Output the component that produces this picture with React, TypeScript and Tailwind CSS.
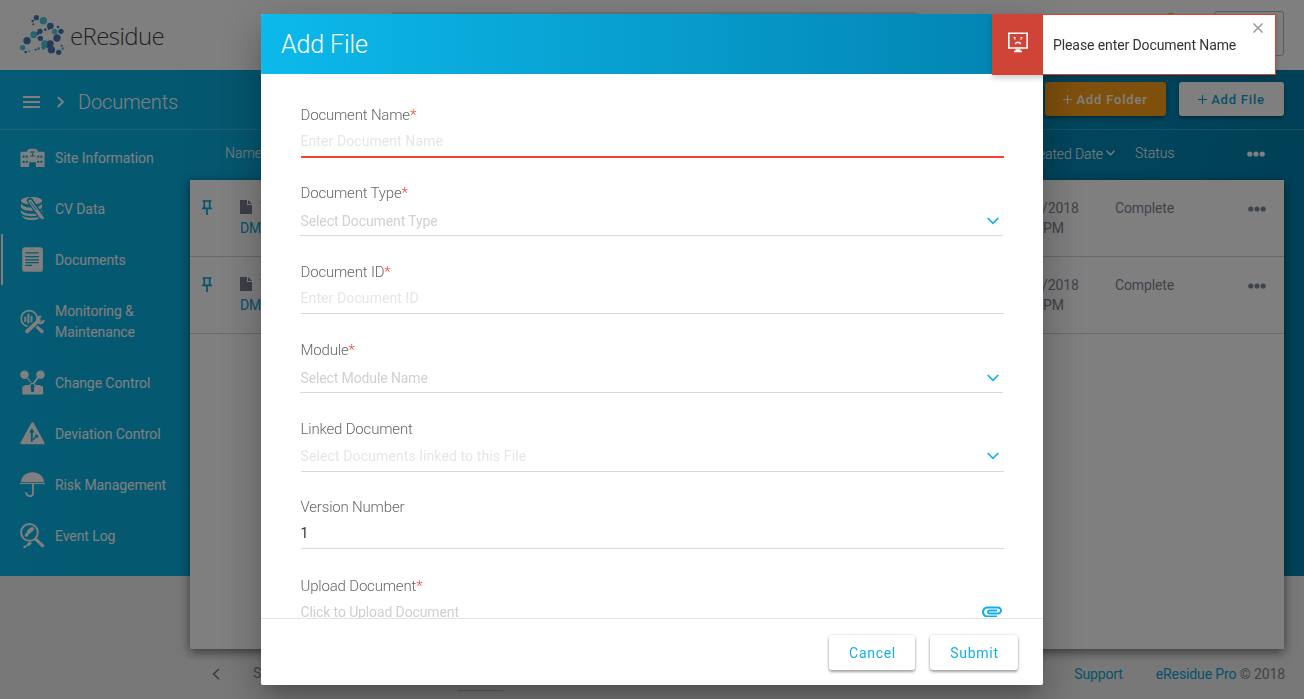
import React from 'react';

const DARK = '#4878b4';
const TEAL = '#4acade';

const logoDots: [number, number, number, string][] = [
  [107, 52, 8, DARK], [96, 62, 4, DARK], [98, 72, 3, DARK], [149, 77, 10, DARK], [172, 80, 4, DARK],
  [181, 93, 8, DARK], [169, 113, 11, DARK], [118, 93, 8, DARK], [110, 100, 5, DARK], [119, 114, 8, DARK],
  [79, 121, 11, DARK], [134, 88, 4, DARK], [144, 86, 3, DARK], [75, 155, 4, DARK], [152, 148, 11, DARK],
  [174, 156, 8, DARK], [183, 136, 3, DARK], [105, 148, 3, DARK], [141, 138, 5, DARK],
  [85, 153, 3, TEAL], [66, 142, 8, TEAL], [99, 103, 10, TEAL], [128, 61, 11, TEAL], [162, 94, 8, TEAL],
  [132, 130, 10, TEAL], [129, 141, 7, TEAL], [186, 145, 4, TEAL], [114, 145, 4, TEAL], [149, 130, 10, DARK],
];

function Logo() {
  return (
    <div className="flex items-center">
      <svg className="h-[40px] w-[44px]" viewBox="58 44 132 120">
        {logoDots.map(([x, y, r, c], i) => (
          <circle key={i} cx={x} cy={y} r={r} fill={c} />
        ))}
      </svg>
      <span className="mt-[2px] ml-[6px] font-['Open_Sans','Noto_Sans',sans-serif] text-[24px] leading-[40px] font-light tracking-[-0.6px] text-[#444]">
        eResidue
      </span>
    </div>
  );
}

const navIcon = 'h-[25px] w-[25px] shrink-0';
const hole = '#0ab0df';

const SiteIcon = () => (
  <svg className={navIcon} viewBox="0 0 26 26" fill="#fff">
    <path d="M.5 7H7.500V5.500L10 4h6l2.500 1.500V7h7v16h-9v-5h-7v5h-9z" />
    <path d="M2.800 11h2v2.300h-2zM6 11h2v2.300H6zM2.800 16.300h2v2.300h-2zM6 16.300h2v2.300H6zM18 11h2v2.300h-2zM21.200 11h2v2.300h-2zM18 16.300h2v2.300h-2zM21.200 16.300h2v2.300h-2zM10.500 6.800h5v1.100h-5zM10.500 10.800h5v1.100h-5zM12.500 8h1v3h-1z" fill={hole} />
    <path d="M11 18.500h4V23h-4z" fill={hole} />
  </svg>
);

const DataIcon = () => (
  <svg className={navIcon} viewBox="0 0 26 26">
    <ellipse cx="12" cy="5" rx="11" ry="4" fill="#fff" />
    <path d="M1 8c2 3 6 4 11 4s9-1 11-4v3.500c-2 3.500-6 4-11 4s-10-1-11-4zM1 14.500c2 3 6 4 11 4s9-1 11-4V17c-2 3.500-6 4-11 4S2 20 1 17zM2 20c2 2 5 2.700 10 2.700S20 22 22 20c-1 4-5 5-10 5s-9-1.500-10-5z" fill="#fff" />
    <path d="M10.500 5 21 20" stroke={hole} strokeWidth="6.500" strokeLinecap="round" />
    <path d="M10.500 5.500 22 21.500" stroke="#fff" strokeWidth="3.600" strokeLinecap="round" />
    <path d="M20 20l4.500 3.500" stroke="#fff" strokeWidth="2.500" />
    <path d="M10.800 6 17 14.500" stroke={hole} strokeWidth="1" />
  </svg>
);

const DocumentIcon = () => (
  <svg className={navIcon} viewBox="0 0 26 26">
    <rect x="2.300" y=".3" width="21.500" height="25.500" rx="3" fill="#fff" />
    <path d="M5.500 6.200h14M5.500 10h14M5.500 13.300h14M5.500 16.300h14M5.500 19h7" stroke={hole} strokeWidth="1.300" />
  </svg>
);

const MonitorIcon = () => (
  <svg className={navIcon} viewBox="0 0 26 26" fill="none" stroke="#fff">
    <circle cx="9.500" cy="10" r="8.300" strokeWidth="1.800" />
    <path d="M5.500 8v5.500M8.700 5v10M12 7v7" strokeWidth="2" />
    <path d="M16.500 17.500 24 24.500" strokeWidth="3.400" />
    <path d="M6.500 24 19 12" stroke={hole} strokeWidth="6.500" />
    <path d="M7.500 23.200 19.500 11.800" strokeWidth="4" strokeLinecap="round" />
    <path d="M22 8.200a3.200 3.200 0 1 0 2.500 3.300" strokeWidth="2.600" />
  </svg>
);

const ChangeIcon = () => (
  <svg className={navIcon} viewBox="0 0 26 26">
    <g fill="#fff">
      <circle cx="4.700" cy="5" r="4.400" />
      <circle cx="21.300" cy="5" r="4.400" />
      <path d="M2.500 17.500 6 15.500h3.500l2-2h3l2 2H20l4 2V25.500H2.500z" />
    </g>
    <path d="M7.500 8l4 5" stroke="#fff" strokeWidth="1.700" strokeDasharray="1.500 .7" />
    <path d="M18.500 8 14 14" stroke="#fff" strokeWidth="2" />
    <path d="M11.300 18.200a2.200 2.200 0 1 1 3.400 0l-.4 4.800h-2.600z" fill={hole} />
  </svg>
);

const DeviationIcon = () => (
  <svg className={navIcon} viewBox="0 0 26 26">
    <path d="M13 2.500 24.300 23H1.700z" fill="#fff" stroke="#fff" strokeWidth="2.500" strokeLinejoin="round" />
    <path d="M12.300 21.500V11" stroke={hole} strokeWidth="2" />
    <path d="M9.500 12 12.300 7.500l2.800 4.500z" fill={hole} />
    <path d="M13.500 19.500 17 16" stroke={hole} strokeWidth="1.600" />
    <path d="M14.800 14.200h4v4z" fill={hole} />
  </svg>
);

const RiskIcon = () => (
  <svg className={navIcon} viewBox="0 0 26 26">
    <path d="M1 10.300C1.500 4.500 6.500.3 13 .3s11.500 4.200 12 10z" fill="#fff" />
    <path d="M0 11.900h26" stroke="#fff" strokeWidth="1.300" />
    <path d="M13.500 12v9.500a3 3 0 0 1-3.500 3.500 3.500 3.500 0 0 1-3.500-4" fill="none" stroke="#fff" strokeWidth="1.900" />
  </svg>
);

const EventIcon = () => (
  <svg className={navIcon} viewBox="0 0 26 26" fill="none" stroke="#fff">
    <circle cx="9.800" cy="9.800" r="8.700" strokeWidth="2" />
    <path d="M16 16.500l8.500 8" strokeWidth="3.200" />
    <path d="M9.300 9 12.500 6.300" strokeWidth="4.200" strokeLinecap="round" />
    <path d="M6.500 12.800l1-1.500" strokeWidth="3.200" strokeLinecap="round" />
    <path d="M8.500 22.500l2-1.500" strokeWidth="3" strokeLinecap="round" />
    <path d="M4.500 25l1.500-1" strokeWidth="2.200" strokeLinecap="round" />
  </svg>
);

const navItems: { label: React.ReactNode; icon: React.FC; active?: boolean }[] = [
  { label: 'Site Information', icon: SiteIcon },
  { label: 'CV Data', icon: DataIcon },
  { label: 'Documents', icon: DocumentIcon, active: true },
  { label: <>Monitoring &amp;<br />Maintenance</>, icon: MonitorIcon },
  { label: 'Change Control', icon: ChangeIcon },
  { label: 'Deviation Control', icon: DeviationIcon },
  { label: 'Risk Management', icon: RiskIcon },
  { label: 'Event Log', icon: EventIcon },
];

function Sidebar() {
  return (
    <nav className="flex w-[190px] shrink-0 flex-col pt-[2px]">
      {navItems.map(({ label, icon: Icon, active }, i) => (
        <div key={i} className="flex">
          <span className={active ? 'ml-px w-[2px] bg-white' : 'ml-px w-[2px]'} />
          <div className="flex items-center py-[15px] pl-[17px] text-[14px] leading-[21px] tracking-[-0.08px] text-white">
            <span className="-my-[3px]"><Icon /></span>
            <span className="mt-px -mb-px ml-[10px]">{label}</span>
          </div>
        </div>
      ))}
    </nav>
  );
}

function Dots({ className }: { className: string }) {
  return (
    <svg className={className} viewBox="0 0 18 6" fill="currentColor">
      <circle cx="2.800" cy="3" r="2.600" />
      <circle cx="9" cy="3" r="2.600" />
      <circle cx="15.200" cy="3" r="2.600" />
    </svg>
  );
}

function Chevron({ className }: { className: string }) {
  return (
    <svg className={className} viewBox="0 0 12 8" fill="none" stroke="currentColor" strokeWidth="1.700">
      <path d="M.7 1 6 6.300 11.300 1" />
    </svg>
  );
}

function Row() {
  return (
    <div className="flex h-[77px] border-b border-[#d2d2d2] text-[14px] leading-[20px] tracking-[-0.12px] text-[#7f8897]">
      <svg className="mt-[19px] ml-[11px] h-[17px] w-[12px] shrink-0" viewBox="0 0 12 17" fill="none" stroke="#0aa5d4" strokeWidth="1.700">
        <path d="M1.500 2h9M3.300 2v6.500M8.700 2v6.500M1 9.300h10M6 9.500V16" />
      </svg>
      <div className="ml-[27px] w-[38px] pt-[18px]">
        <div className="flex h-[20px] items-center">
          <svg className="mt-[-3px] h-[14px] w-[12px]" viewBox="0 0 12 14" fill="#7a8191">
            <path d="M0 0h7v5h5v9H0zM8 0l4 4H8z" />
          </svg>
          <span className="ml-[8px]">T</span>
        </div>
        <div className="text-[#0aa5d4]">DM</div>
      </div>
      <div className="ml-auto flex w-[241px] pt-[18px]">
        <div className="w-[72px]">
          <div className="-ml-px">/2018</div>
          <div className="whitespace-nowrap">PM</div>
        </div>
        <div>Complete</div>
        <Dots className="mt-[8px] mr-[18px] ml-auto h-[6px] w-[18px]" />
      </div>
    </div>
  );
}

function Page() {
  return (
    <div className="flex h-[699px] flex-col bg-[#f0f0f0]">
      <header className="flex h-[70px] shrink-0 items-center bg-white pl-[20px]">
        <Logo />
        <div className="mt-[-3px] ml-[228px] h-[44px] w-[525px] rounded-[2px] border-2 border-[#dfe0e6]" />
        <span className="mt-[-44px] mr-[36px] mb-[-14px] ml-auto h-[14px] w-[14px] self-center rounded-full bg-[#ff9f19]" />
        <div className="mt-[-3px] mr-[20px] h-[45px] w-[70px] rounded-[3px] border border-[#b4b8c4]" />
      </header>
      <div className="flex flex-1 flex-col bg-[linear-gradient(90deg,#0ab7e8,#0282b0)] bg-[length:100%_506px] bg-no-repeat">
        <div className="flex h-[60px] shrink-0 items-center border-b border-white/20 pr-[20px] pl-[23px] text-white">
          <svg className="mt-[4px] h-[12px] w-[17px]" viewBox="0 0 17 12" stroke="#fff" strokeWidth="2">
            <path d="M0 1h17M0 6h17M0 11h17" />
          </svg>
          <svg className="mt-[4px] ml-[17px] h-[12px] w-[7px]" viewBox="0 0 7 12" fill="none" stroke="#fff" strokeWidth="1.800">
            <path d="M.8 1 6 6 .8 11" />
          </svg>
          <h1 className="mt-[4px] ml-[14px] text-[20px] font-light tracking-[-0.15px]">Documents</h1>
          <button className="mt-[-1px] ml-auto flex h-[34px] w-[121px] items-center justify-center rounded-[3px] bg-[#ff9f19] pt-px text-[13px] font-medium tracking-[0.8px] text-white shadow-[0_2px_4px_rgba(0,0,0,0.4)]">
            <svg className="mr-[4px] h-[9px] w-[9px]" viewBox="0 0 9 9" stroke="currentColor" strokeWidth="1.200"><path d="M0 4.500h9M4.500 0v9" /></svg>
            Add Folder
          </button>
          <button className="mt-[-1px] ml-[13px] flex h-[34px] w-[105px] items-center justify-center rounded-[3px] bg-white pt-px text-[13px] font-medium tracking-[0.8px] text-[#0aa5d4] shadow-[0_2px_4px_rgba(0,0,0,0.4)]">
            <svg className="mr-[4px] h-[9px] w-[9px]" viewBox="0 0 9 9" stroke="currentColor" strokeWidth="1.200"><path d="M0 4.500h9M4.500 0v9" /></svg>
            Add File
          </button>
        </div>
        <div className="flex flex-1">
          <Sidebar />
          <div className="flex flex-1 flex-col pr-[20px]">
            <div className="flex h-[50px] items-center pl-[35px] text-[14px] font-light text-white">
              <span className="-mt-[4px]">Name</span>
              <span className="-mt-[2px] ml-auto tracking-[-0.1px]">Created Date</span>
              <Chevron className="-mt-[4px] ml-[3px] h-[6px] w-[9px]" />
              <span className="-mt-[4px] ml-[20px] w-[112px]">Status</span>
              <Dots className="-mt-[3px] mr-[19px] h-[6px] w-[18px]" />
            </div>
            <div className="h-[469px] bg-white shadow-[0_3px_10px_rgba(0,0,0,0.55)]">
              <Row />
              <Row />
            </div>
            <div className="flex h-[50px] items-center pl-[22px] text-[14px] tracking-[-0.12px] text-[#7f8897]">
              <svg className="h-[12px] w-[8px]" viewBox="0 0 8 12" fill="none" stroke="#777" strokeWidth="1.600">
                <path d="M7 1 1.500 6 7 11" />
              </svg>
              <span className="-mt-[2px] ml-[33px]">S</span>
              <span className="mt-[32px] ml-[197px] h-px w-[45px] bg-[#c4c4c4]" />
              <span className="mr-[33px] ml-auto text-[#0aa5d4]">Support</span>
              <span className="-mr-px"><span className="text-[#0aa5d4]">eResidue Pro</span> © 2018</span>
            </div>
          </div>
        </div>
      </div>
    </div>
  );
}

type FieldProps = {
  label: string;
  required?: boolean;
  height: string;
  box: string;
  text: string;
  value: string;
  icon?: React.ReactNode;
};

const chevron = <Chevron className="mt-[6px] ml-auto h-[8px] w-[12px] text-[#12b0e6]" />;

const fields: FieldProps[] = [
  { label: 'Document Name', required: true, height: 'h-[78px]', box: 'ml-px h-[33px] border-b-2 border-[#f44336] pt-[6px]', text: 'tracking-[0.08px] text-[#e6e6e6]', value: 'Enter Document Name' },
  { label: 'Document Type', required: true, height: 'h-[79px]', box: 'mr-px h-[33px] border-b border-[#d9d9dc] pt-[8px] pr-[4px] pl-px', text: 'tracking-[-0.1px] text-[#d0d0d0]', value: 'Select Document Type', icon: chevron },
  { label: 'Document ID', required: true, height: 'h-[78px]', box: 'ml-px h-[32px] border-b border-[#d9d9dc] pt-[6px]', text: 'tracking-[0.1px] text-[#e6e6e6]', value: 'Enter Document ID' },
  { label: 'Module', required: true, height: 'h-[79px]', box: 'mr-px h-[33px] border-b border-[#d9d9dc] pt-[8px] pr-[4px] pl-px', text: 'tracking-[-0.12px] text-[#d0d0d0]', value: 'Select Module Name', icon: chevron },
  { label: 'Linked Document', height: 'h-[78px]', box: 'ml-px h-[33px] border-b border-[#d9d9dc] pt-[7px] pr-[5px]', text: 'tracking-[0.12px] text-[#e6e6e6]', value: 'Select Documents linked to this File', icon: chevron },
  { label: 'Version Number', height: 'h-[79px]', box: 'ml-px h-[32px] border-b border-[#d9d9dc] pt-[6px]', text: 'text-[#333]', value: '1' },
  {
    label: 'Upload Document', required: true, height: 'h-[79px]', box: 'ml-px h-[32px] pt-[6px] pr-[2px]', text: 'tracking-[-0.12px] text-[#d0d0d0]', value: 'Click to Upload Document',
    icon: (
      <svg className="mt-[4px] ml-auto h-[11px] w-[20px]" viewBox="2 6.500 20 11" fill="#12b0e6">
        <path d="M2 12.500C2 9.460 4.460 7 7.500 7H18c2.210 0 4 1.790 4 4s-1.790 4-4 4H9.500C8.120 15 7 13.880 7 12.500S8.120 10 9.500 10H17v2H9.410c-.55 0-.55 1 0 1H18c1.100 0 2-.9 2-2s-.9-2-2-2H7.500C5.570 9 4 10.570 4 12.500S5.570 16 7.500 16H17v2H7.500C4.460 18 2 15.540 2 12.500z" />
      </svg>
    ),
  },
];

function Field({ label, required, height, box, text, value, icon }: FieldProps) {
  return (
    <div className={`${height} shrink-0`}>
      <div className="h-[20px] pl-[0.5px] text-[15px] leading-[20px] font-light tracking-[-0.18px] text-[#666]">
        {label}
        {required && <span className="text-[#f44336]">*</span>}
      </div>
      <div className={`flex items-start ${box}`}>
        <span className={`-ml-[0.5px] text-[14px] leading-[20px] ${text}`}>{value}</span>
        {icon}
      </div>
    </div>
  );
}

const modalButton =
  'h-[35px] rounded-[3px] bg-white pt-[2px] pl-px text-[14px] font-normal tracking-[0.7px] text-[#12b0e6] shadow-[0_2px_3px_rgba(0,0,0,0.35),0_0_3px_rgba(0,0,0,0.15)]';

function AddFileDialog() {
  return (
    <div className="fixed inset-0 flex justify-center bg-black/50 pt-[14px]">
      <section className="flex h-[671px] w-[782px] flex-col overflow-hidden rounded-[2px] bg-white shadow-[0_11px_15px_-7px_rgba(0,0,0,0.2),0_24px_38px_3px_rgba(0,0,0,0.14),0_9px_46px_8px_rgba(0,0,0,0.12)]">
        <div className="flex h-[60px] shrink-0 items-center bg-[linear-gradient(90deg,#0cb9eb,#0282b0)] pl-[20px]">
          <h2 className="mt-[2px] text-[25px] font-light tracking-[-0.1px] text-white">Add File</h2>
        </div>
        <div className="flex h-[544px] flex-col overflow-hidden px-[39px] pt-[31px]">
          {fields.map((f) => (
            <Field key={f.label} {...f} />
          ))}
        </div>
        <div className="flex flex-1 justify-end gap-[15px] border-t border-[#e3e3e3] pt-[16px] pr-[25px]">
          <button className={`${modalButton} w-[86px]`}>Cancel</button>
          <button className={`${modalButton} w-[88px]`}>Submit</button>
        </div>
      </section>
    </div>
  );
}

function Toast() {
  return (
    <div className="fixed top-[14px] right-[28px] flex h-[61px] w-[284px] border border-[#d04437] bg-white shadow-[0_3px_6px_rgba(0,0,0,0.2)]">
      <div className="flex w-[50px] shrink-0 items-center justify-center bg-[#d04437]">
        <svg className="mt-[-4px] h-[21px] w-[20px]" viewBox="0 0 20 21" fill="none" stroke="#fff">
          <path d="M.8 1.200h18.400v14.800H.8z" strokeWidth="1.600" />
          <path d="M5.500 5.700h2M12.500 5.700h2M6.500 7.200h1M12.500 7.200h1" strokeWidth="1.300" />
          <path d="M7.300 12 8.500 10.500h3l1.200 1.500" strokeWidth="1.400" />
          <path d="M7.500 18h5M6 19.500h8" strokeWidth="1.600" />
        </svg>
      </div>
      <span className="mt-[20px] ml-[10px] text-[14px] leading-[20px] tracking-[-0.1px] whitespace-nowrap text-[#333]">Please enter Document Name</span>
      <svg className="mt-[8px] mr-[12px] ml-auto h-[10px] w-[10px]" viewBox="0 0 10 10" stroke="#999" strokeWidth="1.500">
        <path d="M.5.5l9 9M9.500.5l-9 9" />
      </svg>
    </div>
  );
}

export default function App() {
  return (
    <div className="h-[699px] overflow-hidden font-['Roboto','Liberation_Sans',sans-serif]">
      <Page />
      <AddFileDialog />
      <Toast />
    </div>
  );
}
